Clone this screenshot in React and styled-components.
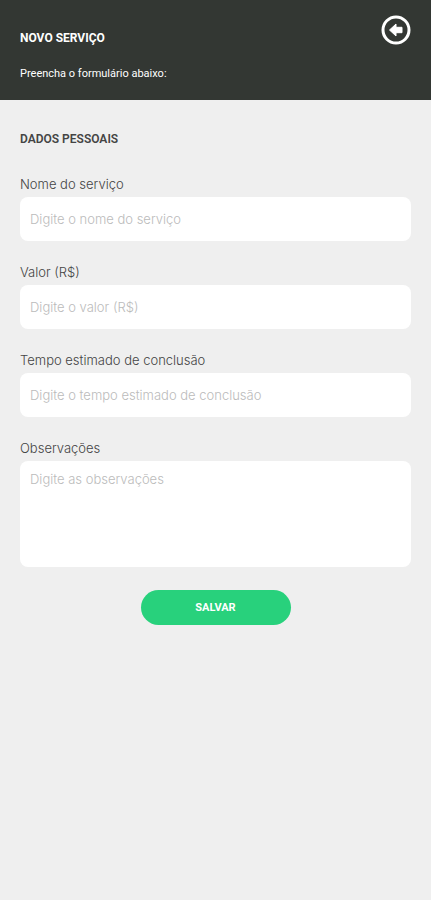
import React, { Component } from 'react';
import styled, { createGlobalStyle } from 'styled-components';

const fields = [
  {
    id: 'name',
    label: 'Nome do serviço',
    placeholder: 'Digite o nome do serviço',
  },
  { id: 'price', label: 'Valor (R$)', placeholder: 'Digite o valor (R$)' },
  {
    id: 'time',
    label: 'Tempo estimado de conclusão',
    placeholder: 'Digite o tempo estimado de conclusão',
  },
  {
    id: 'notes',
    label: 'Observações',
    placeholder: 'Digite as observações',
    multiline: true,
  },
];

class App extends Component {
  state = { name: '', price: '', time: '', notes: '' };

  handleChange = e => {
    this.setState({ [e.target.name]: e.target.value });
  };

  handleSubmit = e => {
    e.preventDefault();
  };

  renderField = ({ id, label, placeholder, multiline }) => {
    const Control = multiline ? TextArea : Input;

    return (
      <Field key={id}>
        <Label htmlFor={id}>{label}</Label>
        <Control
          id={id}
          name={id}
          placeholder={placeholder}
          value={this.state[id]}
          onChange={this.handleChange}
        />
      </Field>
    );
  };

  render = () => {
    return (
      <>
        <GlobalStyle />
        <Header>
          <div>
            <Title>NOVO SERVIÇO</Title>
            <Subtitle>Preencha o formulário abaixo:</Subtitle>
          </div>
          <BackButton type="button" aria-label="Voltar">
            <BackIcon viewBox="0 0 30 30" aria-hidden="true">
              <circle cx="15" cy="15" r="13" />
              <path d="M8.5 15L15 9V12.3H21V17.7H15V21Z" />
            </BackIcon>
          </BackButton>
        </Header>
        <Form onSubmit={this.handleSubmit}>
          <SectionTitle>DADOS PESSOAIS</SectionTitle>
          {fields.map(this.renderField)}
          <SaveButton type="submit">SALVAR</SaveButton>
        </Form>
      </>
    );
  };
}

const GlobalStyle = createGlobalStyle`
  * {
    box-sizing: border-box;
  }

  body {
    margin: 0;
    background: #efefef;
    font-family: Roboto, sans-serif;
  }
`;

const Header = styled.header`
  display: flex;
  justify-content: space-between;
  align-items: flex-start;
  padding: 15px 20px 18px;
  background: #333733;
  color: #fff;
`;

const Title = styled.h1`
  margin: 15px 0 20px;
  font-size: 12px;
  line-height: 16px;
  font-weight: 700;
`;

const Subtitle = styled.p`
  margin: 0;
  font-size: 11px;
  line-height: 16px;
`;

const BackButton = styled.button`
  display: flex;
  padding: 0;
  border: 0;
  background: none;
  color: inherit;
  cursor: pointer;
`;

const BackIcon = styled.svg`
  width: 30px;
  height: 30px;

  circle {
    fill: none;
    stroke: currentColor;
    stroke-width: 3;
  }

  path {
    fill: currentColor;
    stroke: currentColor;
    stroke-width: 1;
    stroke-linejoin: round;
  }
`;

const Form = styled.form`
  display: flex;
  flex-direction: column;
  gap: 23px;
  padding: 31px 20px;
`;

const SectionTitle = styled.h2`
  margin: 0 0 6px;
  color: #444;
  font-size: 12px;
  line-height: 16px;
  font-weight: 600;
`;

const Field = styled.div`
  display: flex;
  flex-direction: column;
  gap: 5px;
`;

const Label = styled.label`
  color: #444;
  font-family: Inter, sans-serif;
  font-size: 13px;
  line-height: 16px;
  font-weight: 300;
`;

const Input = styled.input`
  width: 100%;
  height: 44px;
  padding: 0 10px;
  border: 0;
  border-radius: 8px;
  background: #fff;
  color: #444;
  font-family: Inter, sans-serif;
  font-size: 13px;
  line-height: 16px;
  font-weight: 300;

  &::placeholder {
    color: #bbb;
    opacity: 1;
  }
`;

const TextArea = styled(Input).attrs({ as: 'textarea' })`
  display: block;
  height: 106px;
  padding: 10px;
  resize: none;
`;

const SaveButton = styled.button`
  align-self: center;
  width: 150px;
  height: 35px;
  border: 0;
  border-radius: 18px;
  background: #28d17c;
  color: #fff;
  font-family: inherit;
  font-size: 11px;
  font-weight: 700;
  cursor: pointer;
`;

export default App;
